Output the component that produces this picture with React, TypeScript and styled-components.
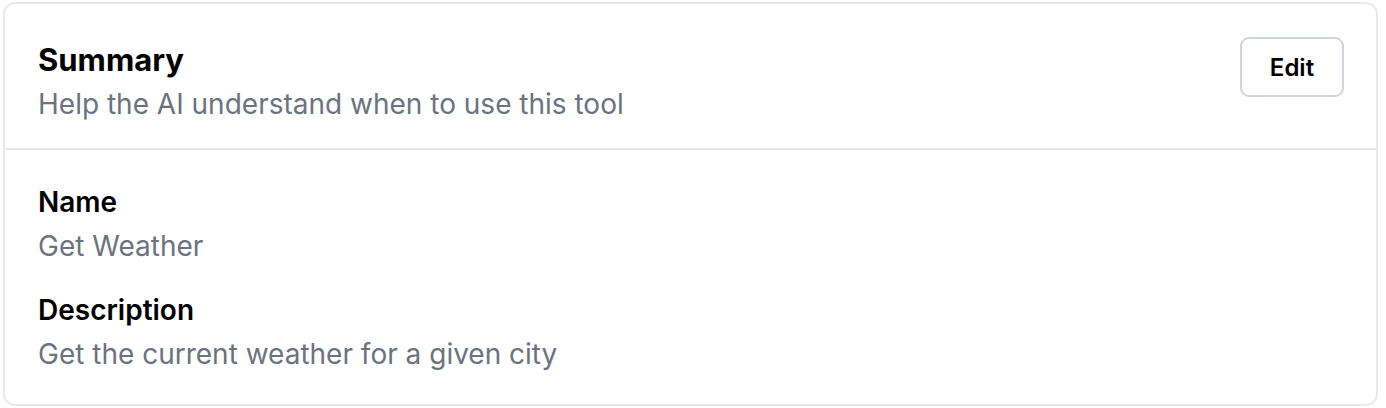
import React from "react";
import styled, { createGlobalStyle } from "styled-components";

const Global = createGlobalStyle`
  html, body { margin: 0; padding: 0; background: #ffffff; }
  body { font-family: Inter, "Noto Sans", sans-serif; -webkit-font-smoothing: antialiased; }
  * { box-sizing: border-box; }
`;

const Page = styled.div`
  padding: 2px 8px 2px 3px;
`;

const Card = styled.section`
  border: 2px solid #e8eaed;
  border-radius: 12px;
  background: #ffffff;
`;

const Header = styled.header`
  display: flex;
  justify-content: space-between;
  align-items: flex-start;
  padding: 33px 32px 24px 33px;
  border-bottom: 2px solid #e8eaed;
`;

const HeadText = styled.div`
  display: flex;
  flex-direction: column;
  gap: 4px;
  padding-top: 3px;
`;

const Title = styled.h2`
  margin: 0;
  font-size: 31px;
  line-height: 40px;
  font-weight: 700;
  color: #000000;
`;

const Subtitle = styled.p`
  margin: 0;
  font-size: 28px;
  line-height: 40px;
  color: #6b7280;
`;

const Button = styled.button`
  width: 104px;
  height: 60px;
  border: 2px solid #d1d5db;
  border-radius: 9px;
  background: #ffffff;
  font-family: inherit;
  font-size: 24px;
  font-weight: 600;
  color: #000000;
`;

const Body = styled.div`
  display: flex;
  flex-direction: column;
  gap: 24px;
  padding: 32px 33px 30px;
`;

const Field = styled.div`
  display: flex;
  flex-direction: column;
  gap: 4px;
`;

const Label = styled.div`
  font-size: 28px;
  line-height: 40px;
  font-weight: 600;
  color: #000000;
`;

const Value = styled.div`
  font-size: 28px;
  line-height: 40px;
  color: #6b7280;
`;

const fields = [
  { label: "Name", value: "Get Weather" },
  { label: "Description", value: "Get the current weather for a given city" },
];

export default function App() {
  return (
    <>
      <Global />
      <Page>
        <Card>
          <Header>
            <HeadText>
              <Title>Summary</Title>
              <Subtitle>Help the AI understand when to use this tool</Subtitle>
            </HeadText>
            <Button>Edit</Button>
          </Header>
          <Body>
            {fields.map((f) => (
              <Field key={f.label}>
                <Label>{f.label}</Label>
                <Value>{f.value}</Value>
              </Field>
            ))}
          </Body>
        </Card>
      </Page>
    </>
  );
}
